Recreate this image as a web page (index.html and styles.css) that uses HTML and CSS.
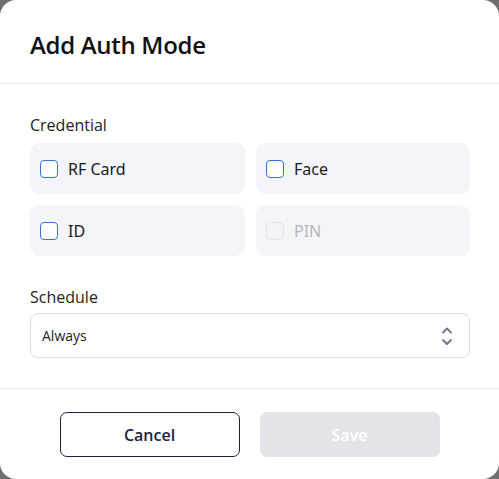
FILE: index.html
```html
<!DOCTYPE html>
<html lang="en">
<head>
<meta charset="utf-8">
<title>Add Auth Mode</title>
<link rel="stylesheet" href="styles.css">
</head>
<body>
<div class="dialog">
  <header class="dialog-header">
    <h1 class="title">Add Auth Mode</h1>
  </header>
  <section class="dialog-body">
    <div class="field-label">Credential</div>
    <div class="options">
      <label class="option"><span class="box"></span><span class="opt-text">RF Card</span></label>
      <label class="option"><span class="box"></span><span class="opt-text">Face</span></label>
      <label class="option"><span class="box"></span><span class="opt-text">ID</span></label>
      <label class="option disabled"><span class="box"></span><span class="opt-text">PIN</span></label>
    </div>
    <div class="field-label schedule-label">Schedule</div>
    <div class="select">
      <span class="select-value">Always</span>
      <svg class="chev" width="16" height="24" viewBox="0 0 16 24" fill="none" stroke="#6b7194" stroke-width="1.8" stroke-linecap="round" stroke-linejoin="round">
        <path d="M4 8.5 L8 4.5 L12 8.5"/>
        <path d="M4 16 L8 20 L12 16"/>
      </svg>
    </div>
  </section>
  <footer class="dialog-footer">
    <button class="btn btn-cancel">Cancel</button>
    <button class="btn btn-save">Save</button>
  </footer>
</div>
</body>
</html>
```
FILE: styles.css
```css
html, body {
  margin: 0;
  padding: 0;
  background: #6f6f6f;
}
body {
  width: 499px;
  height: 479px;
  font-family: "Open Sans", "Noto Sans", sans-serif;
  color: #1a1a1a;
}
.dialog {
  width: 499px;
  height: 479px;
  background: #ffffff;
  border-radius: 16px;
  display: flex;
  flex-direction: column;
  box-sizing: border-box;
}
.dialog-header {
  height: 84px;
  box-sizing: border-box;
  border-bottom: 1px solid #e3e3e8;
  padding: 0 30px;
  display: flex;
  align-items: center;
}
.title {
  margin: 0;
  margin-top: 5px;
  font-size: 24px;
  font-weight: 600;
  color: #111111;
  letter-spacing: -0.3px;
}
.dialog-body {
  padding: 31px 29px 30px 30px;
  border-bottom: 1px solid #e3e3e8;
}
.field-label {
  font-size: 16px;
  line-height: 20px;
  color: #222222;
}
.options {
  margin-top: 8px;
  display: grid;
  grid-template-columns: 215px 214px;
  column-gap: 11px;
  row-gap: 11px;
}
.option {
  height: 51px;
  background: #f4f5f9;
  border-radius: 9px;
  display: flex;
  align-items: center;
  padding-left: 10px;
  box-sizing: border-box;
}
.box {
  width: 18px;
  height: 18px;
  box-sizing: border-box;
  border: 1.6px solid #3c6fcf;
  border-radius: 4px;
  background: #ffffff;
  margin-right: 10px;
}
.opt-text {
  font-family: "Noto Sans", sans-serif;
  font-size: 16px;
  color: #1a1a1a;
}
.option.disabled .box {
  border-color: #e5e6ea;
  background: #f3f4f7;
}
.option.disabled .opt-text {
  color: #b4b4bb;
}
.schedule-label {
  margin-top: 31px;
}
.select {
  margin-top: 6px;
  height: 45px;
  box-sizing: border-box;
  border: 1px solid #dedee2;
  border-radius: 8px;
  display: flex;
  align-items: center;
  justify-content: space-between;
  padding: 0 14px 0 11px;
}
.select-value {
  font-size: 14px;
  color: #222222;
}
.chev {
  display: block;
  margin-top: 1px;
}
.dialog-footer {
  flex: 1;
  display: flex;
  justify-content: center;
  align-items: center;
  gap: 20px;
  padding-top: 1px;
}
.btn {
  width: 180px;
  height: 45px;
  border-radius: 7px;
  font-family: "Open Sans", sans-serif;
  font-size: 16px;
  font-weight: 600;
  box-sizing: border-box;
}
.btn-cancel {
  background: #ffffff;
  border: 1.3px solid #1d2040;
  color: #1d2040;
}
.btn-save {
  background: #e3e3ea;
  border: none;
  color: #ffffff;
}
```
